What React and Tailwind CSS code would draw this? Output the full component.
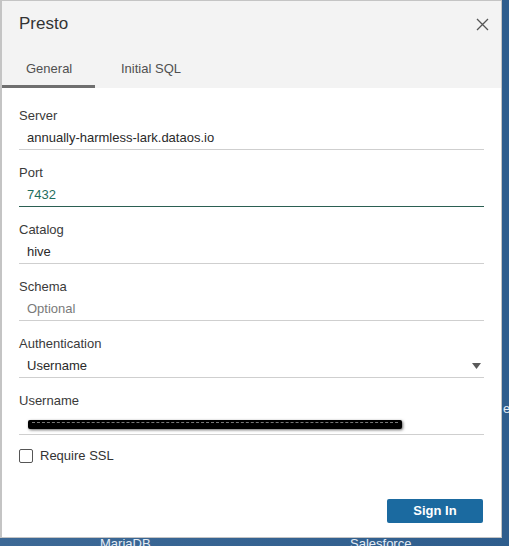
import React from "react";

const fields = [
  { label: "Server", value: "annually-harmless-lark.dataos.io" },
  { label: "Port", value: "7432", focused: true },
  { label: "Catalog", value: "hive" },
  { label: "Schema", placeholder: "Optional" },
  { label: "Authentication", value: "Username", select: true },
  { label: "Username", redacted: true },
];

function Field({ field }) {
  const lineClass = field.focused ? "border-[#2b5f52]" : "border-[#cfcfcf]";
  return (
    <div className="mb-[15px]">
      <div className="h-4 text-[13px] leading-4 text-[#3a3a3a]">{field.label}</div>
      <div className={`flex h-[26px] items-center border-b pl-2 pr-[4px] pt-[2px] text-[13px] ${lineClass}`}>
        {field.redacted ? (
          <div className="relative ml-[1px] mt-[4px] h-[9px] w-[374px] rounded-[2px] bg-black shadow-[1px_1px_3px_rgba(0,0,0,0.6)]">
            <div className="mx-[4px] mt-[2px] h-[2px] border-t border-dashed border-[#777]" />
          </div>
        ) : field.placeholder ? (
          <span className="text-[#7a7a7a]">{field.placeholder}</span>
        ) : (
          <span className={field.focused ? "text-[#1f6e5e]" : "text-[#2a2a2a]"}>{field.value}</span>
        )}
        {field.select && (
          <svg width="9" height="6" viewBox="0 0 9 6" className="ml-auto mr-[-1px]">
            <path d="M0 0h9L4.5 6z" fill="#5a5a5a" />
          </svg>
        )}
      </div>
    </div>
  );
}

export default function App() {
  return (
    <div
      className="relative h-[546px] w-[509px] overflow-hidden bg-[#3b6794]"
      style={{ fontFamily: '"Liberation Sans", Arial, sans-serif' }}
    >
      {/* page behind the dialog */}
      <div className="h-[546px] bg-gradient-to-r from-[#3d6996] to-[#2e5d8d]">
        <div className="flex pl-[100px] pt-[534px] text-[13px] text-[#e4ecf5]">
          <span className="w-[250px]">MariaDB</span>
          <span>Salesforce</span>
        </div>
      </div>
      <span className="absolute left-[503px] top-[399px] text-[13px] text-[#e4ecf5]">e</span>

      {/* dialog */}
      <div className="absolute left-0 top-0 flex h-[538px] w-[502px] flex-col border border-[#c4c4c4] border-l-2 bg-white">
        <div className="bg-[#f3f3f3]">
          <div className="flex h-[46px] items-center justify-between pl-[17px] pr-[12px]">
            <span className="text-[17px] text-[#333]">Presto</span>
            <svg width="13" height="13" viewBox="0 0 13 13">
              <path d="M1 1l11 11M12 1L1 12" stroke="#555" strokeWidth="1.3" />
            </svg>
          </div>
          <div className="flex h-[41px] text-[13px] text-[#505050]">
            <div className="flex w-[93px] flex-col">
              <span className="flex-1 pl-[24px] pt-[12px]">General</span>
              <div className="h-[3px] bg-[#6f6f6f]" />
            </div>
            <span className="pl-[26px] pt-[12px]">Initial SQL</span>
          </div>
        </div>

        <div className="flex flex-1 flex-col px-[17px] pt-[20px]">
          {fields.map((f) => (
            <Field key={f.label} field={f} />
          ))}

          <div className="mt-[-4px] flex items-center gap-[7px]">
            <div className="h-[14px] w-[14px] rounded-[2px] border border-[#555] bg-white" />
            <span className="text-[13px] text-[#333]">Require SSL</span>
          </div>

          <div className="mt-auto mb-[14px] flex justify-end pr-[1px]">
            <button className="h-[24px] w-[96px] rounded-[2px] bg-[#1b6aa0] text-[13px] font-bold text-white">
              Sign In
            </button>
          </div>
        </div>
      </div>
    </div>
  );
}
